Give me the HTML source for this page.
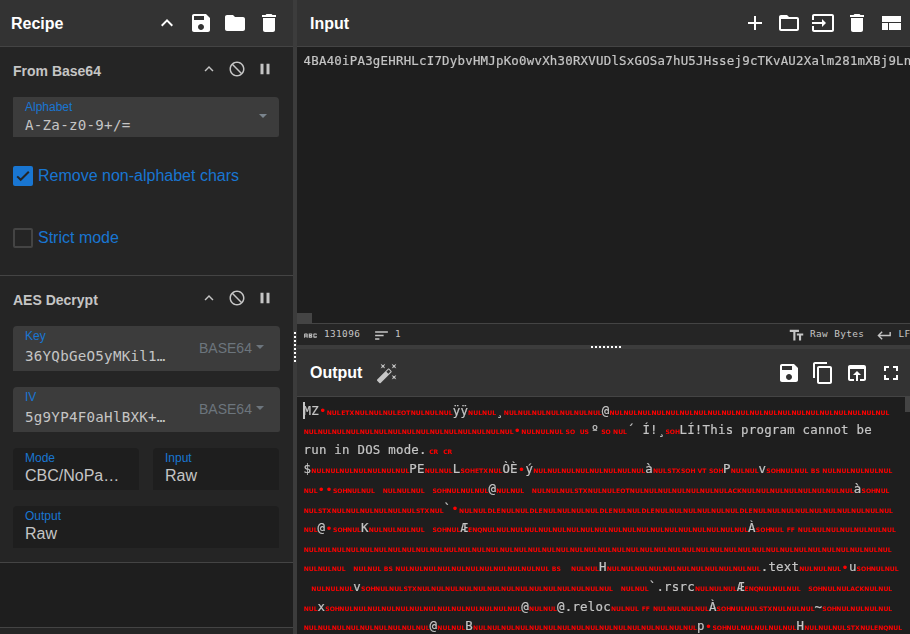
<!DOCTYPE html>
<html lang="en">
<head>
<meta charset="utf-8">
<title>CyberChef</title>
<style>
*{box-sizing:border-box}
html,body{margin:0;padding:0}
body{width:910px;height:634px;overflow:hidden;background:#1e1e1e;color:#c5c5c5;font-family:"Liberation Sans",sans-serif;font-size:14px;position:relative}
.abs{position:absolute}
svg{display:block;position:absolute}
/* panels */
#recipe{position:absolute;left:0;top:0;width:293px;height:634px;background:#1e1e1e}
#vgut{position:absolute;left:293px;top:0;width:4px;height:634px;background:#3c3c3c}
#io{position:absolute;left:297px;top:0;width:613px;height:634px;overflow:hidden}
.title{position:absolute;left:0;width:100%;height:47px;background:#333;border-bottom:1px solid #444;color:#fff;font-weight:bold;font-size:16px;line-height:18px}
.title span{position:absolute;top:15px;white-space:nowrap}
.op{position:absolute;left:0;width:293px;background:#252525;border-bottom:1px solid #444}
.opname{position:absolute;left:13px;top:16px;font-weight:bold;font-size:14px;line-height:16px;color:#c5c5c5;white-space:nowrap}
.arg{position:absolute;background:#3c3c3c;border-radius:4px 4px 2px 0}
.arg.dk{background:#1e1e1e;border-radius:4px 4px 0 0}
.lbl{position:absolute;left:12px;font-size:12px;line-height:14px;color:#1976d2;white-space:nowrap}
.val{position:absolute;left:12px;white-space:nowrap;color:#c5c5c5}
.mono{font-family:"DejaVu Sans Mono","Liberation Mono",monospace}
.m16{font-size:14.2px;letter-spacing:.25px;line-height:18px}
.s16{font-size:16px;line-height:18px}
.b64{position:absolute;font-size:14px;line-height:16px;color:#6c757d;white-space:nowrap}
.b64:after{content:"";position:absolute;left:57px;top:5px;border-top:4.2px solid #6c757d;border-left:4.2px solid transparent;border-right:4.2px solid transparent}
.cb{position:absolute;left:13px;width:20px;height:20px;border-radius:2px}
.cbl{position:absolute;left:38px;font-size:16px;line-height:18px;color:#1976d2;white-space:nowrap}
/* editors */
.ed{position:absolute;left:0;width:613px;overflow:hidden;will-change:transform}
.ln{position:absolute;left:6.6px;height:19.6px;line-height:19.6px;white-space:pre;font-family:"DejaVu Sans Mono","Liberation Mono",monospace;font-size:12.4px;letter-spacing:.235px;color:#c5c5c5;-webkit-text-stroke:.2px #c5c5c5}
.ln i{display:inline-block;width:14px;text-align:center;font:bold 6.1px/6px "DejaVu Sans","Liberation Sans",sans-serif;letter-spacing:0;color:#f00;-webkit-text-stroke:0;position:relative;top:0}
.ln b{font-weight:normal;color:#f00;-webkit-text-stroke:0;position:relative;top:.5px}
.ln u{display:inline-block;width:7.7px;text-decoration:none}
#status{position:absolute;left:0;top:323px;width:613px;height:22px;background:#252525;border-top:1px solid #444;font-family:"DejaVu Sans Mono","Liberation Mono",monospace;font-size:9.4px;letter-spacing:.39px;line-height:12px;color:#c5c5c5}
#status span{position:absolute;top:4px;white-space:pre}
#hgut{position:absolute;left:0;top:345px;width:613px;height:4px;background:#3c3c3c}
.dot{position:absolute;width:2px;height:2px;background:#fff}
</style>
</head>
<body>

<!-- ================= RECIPE ================= -->
<div id="recipe">
  <div class="title" style="top:0"><span style="left:11px">Recipe</span>
    <svg style="left:155px;top:11px" width="24" height="24" viewBox="0 0 24 24"><path fill="#fff" d="M12 8l-6 6 1.41 1.41L12 10.83l4.59 4.58L18 14z"/></svg><svg style="left:189px;top:11px" width="24" height="24" viewBox="0 0 24 24"><path fill="#fff" d="M17 3H5c-1.11 0-2 .9-2 2v14c0 1.1.89 2 2 2h14c1.1 0 2-.9 2-2V7l-4-4zm-5 16c-1.66 0-3-1.34-3-3s1.34-3 3-3 3 1.34 3 3-1.34 3-3 3zm3-10H5V5h10v4z"/></svg><svg style="left:223px;top:11px" width="24" height="24" viewBox="0 0 24 24"><path fill="#fff" d="M10 4H4c-1.1 0-1.99.9-1.99 2L2 18c0 1.1.9 2 2 2h16c1.1 0 2-.9 2-2V8c0-1.1-.9-2-2-2h-8l-2-2z"/></svg><svg style="left:257px;top:11px" width="24" height="24" viewBox="0 0 24 24"><path fill="#fff" d="M6 19c0 1.1.9 2 2 2h8c1.1 0 2-.9 2-2V7H6v12zM19 4h-3.5l-1-1h-5l-1 1H5v2h14V4z"/></svg>
  </div>

  <div class="op" style="top:47px;height:229px">
    <div class="opname">From Base64</div>
    <svg style="left:199.5px;top:13px" width="18" height="18" viewBox="0 0 24 24"><path fill="#c5c5c5" d="M12 8l-6 6 1.41 1.41L12 10.83l4.59 4.58L18 14z"/></svg><svg style="left:227.7px;top:13px" width="18" height="18" viewBox="0 0 24 24"><path fill="#c5c5c5" d="M12 2C6.48 2 2 6.48 2 12s4.48 10 10 10 10-4.48 10-10S17.52 2 12 2zm0 18c-4.42 0-8-3.58-8-8 0-1.85.63-3.55 1.69-4.9L16.9 18.31C15.55 19.37 13.85 20 12 20zm6.31-3.1L7.1 5.69C8.45 4.63 10.15 4 12 4c4.42 0 8 3.58 8 8 0 1.85-.63 3.55-1.69 4.9z"/></svg><svg style="left:255.5px;top:13px" width="18" height="18" viewBox="0 0 24 24"><path fill="#c5c5c5" d="M6 19h4V5H6v14zm8-14v14h4V5h-4z"/></svg>
    <div class="arg" style="left:13px;top:50px;width:266px;height:40px;border-radius:1px 4px 2px 0">
      <div class="lbl" style="top:2.5px">Alphabet</div>
      <div class="val mono m16" style="top:19px">A-Za-z0-9+/=</div>
      <div class="abs" style="left:246px;top:17px;border-top:4.2px solid #7b858e;border-left:4.2px solid transparent;border-right:4.2px solid transparent"></div>
    </div>
    <div class="cb" style="top:119px;background:#1976d2"><svg width="20" height="20" viewBox="0 0 20 20"><path d="M4.2 10.4 7.7 13.8 15.8 5.7" fill="none" stroke="#252525" stroke-width="2"/></svg></div>
    <div class="cbl" style="top:120px">Remove non-alphabet chars</div>
    <div class="cb" style="top:181px;border:2px solid #444"></div>
    <div class="cbl" style="top:182px">Strict mode</div>
  </div>

  <div class="op" style="top:276px;height:287px">
    <div class="opname">AES Decrypt</div>
    <svg style="left:199.5px;top:13px" width="18" height="18" viewBox="0 0 24 24"><path fill="#c5c5c5" d="M12 8l-6 6 1.41 1.41L12 10.83l4.59 4.58L18 14z"/></svg><svg style="left:227.7px;top:13px" width="18" height="18" viewBox="0 0 24 24"><path fill="#c5c5c5" d="M12 2C6.48 2 2 6.48 2 12s4.48 10 10 10 10-4.48 10-10S17.52 2 12 2zm0 18c-4.42 0-8-3.58-8-8 0-1.85.63-3.55 1.69-4.9L16.9 18.31C15.55 19.37 13.85 20 12 20zm6.31-3.1L7.1 5.69C8.45 4.63 10.15 4 12 4c4.42 0 8 3.58 8 8 0 1.85-.63 3.55-1.69 4.9z"/></svg><svg style="left:255.5px;top:13px" width="18" height="18" viewBox="0 0 24 24"><path fill="#c5c5c5" d="M6 19h4V5H6v14zm8-14v14h4V5h-4z"/></svg>
    <div class="arg" style="left:13px;top:50px;width:267px;height:45px">
      <div class="lbl" style="top:2.5px">Key</div>
      <div class="val mono m16" style="top:21px">36YQbGeO5yMKil1…</div>
      <div class="b64" style="left:186px;top:14px">BASE64</div>
    </div>
    <div class="arg" style="left:13px;top:111px;width:267px;height:45px">
      <div class="lbl" style="top:2.5px">IV</div>
      <div class="val mono m16" style="top:21px">5g9YP4F0aHlBXK+…</div>
      <div class="b64" style="left:186px;top:14px">BASE64</div>
    </div>
    <div class="arg dk" style="left:13px;top:172px;width:126px;height:42px">
      <div class="lbl" style="top:2.5px">Mode</div>
      <div class="val s16" style="top:19px">CBC/NoPa…</div>
    </div>
    <div class="arg dk" style="left:153px;top:172px;width:126px;height:42px">
      <div class="lbl" style="top:2.5px">Input</div>
      <div class="val s16" style="top:19px">Raw</div>
    </div>
    <div class="arg dk" style="left:13px;top:230px;width:266px;height:42px">
      <div class="lbl" style="top:2.5px">Output</div>
      <div class="val s16" style="top:19px">Raw</div>
    </div>
  </div>

  <div class="abs" style="left:0;top:627px;width:293px;height:7px;background:#252525;border-top:1px solid #444"></div>
</div>

<!-- ================= GUTTER ================= -->
<div id="vgut">
<div class="dot" style="left:1px;top:332px"></div><div class="dot" style="left:1px;top:336px"></div><div class="dot" style="left:1px;top:340px"></div><div class="dot" style="left:1px;top:344px"></div><div class="dot" style="left:1px;top:348px"></div><div class="dot" style="left:1px;top:352px"></div><div class="dot" style="left:1px;top:356px"></div><div class="dot" style="left:1px;top:360px"></div>
</div>

<!-- ================= INPUT / OUTPUT ================= -->
<div id="io">
  <div class="title" style="top:0"><span style="left:13px">Input</span>
    <svg style="left:446px;top:11px" width="24" height="24" viewBox="0 0 24 24"><path fill="#fff" d="M19 13h-6v6h-2v-6H5v-2h6V5h2v6h6v2z"/></svg><svg style="left:480px;top:11px" width="24" height="24" viewBox="0 0 24 24"><path fill="#fff" d="M20 6h-8l-2-2H4c-1.1 0-1.99.9-1.99 2L2 18c0 1.1.9 2 2 2h16c1.1 0 2-.9 2-2V8c0-1.1-.9-2-2-2zm0 12H4V8h16v10z"/></svg><svg style="left:514px;top:11px" width="24" height="24" viewBox="0 0 24 24"><path fill="#fff" d="M21 3.01H3c-1.1 0-2 .9-2 2V9h2V4.99h18v14.03H3V15H1v4.01c0 1.1.9 1.98 2 1.98h18c1.1 0 2-.88 2-1.98v-14c0-1.11-.9-2-2-2zM11 16l4-4-4-4v3H1v2h10v3z"/></svg><svg style="left:548px;top:11px" width="24" height="24" viewBox="0 0 24 24"><path fill="#fff" d="M6 19c0 1.1.9 2 2 2h8c1.1 0 2-.9 2-2V7H6v12zM19 4h-3.5l-1-1h-5l-1 1H5v2h14V4z"/></svg><svg style="left:582px;top:11px" width="24" height="24" viewBox="0 0 24 24"><path fill="#fff" d="M3 19h6v-7H3v7zm7 0h12v-7H10v7zM3 5v6h19V5H3z"/></svg>
  </div>

  <div class="ed" style="top:47px;height:276px;background:#1e1e1e">
    <div class="ln" style="top:4px">4BA40iPA3gEHRHLcI7DybvHMJpKo0wvXh30RXVUDlSxGOSa7hU5JHssej9cTKvAU2Xalm281mXBj9Ln</div>
    <div class="abs" style="left:0;top:266px;width:15px;height:10px;background:#444"></div>
  </div>

  <div id="status">
    <svg style="left:5.1px;top:2.5px" width="17" height="17" viewBox="0 0 24 24"><path fill="#c5c5c5" d="M21 11h-1.5v-.5h-2v3h2V13H21v1c0 .55-.45 1-1 1h-3c-.55 0-1-.45-1-1v-4c0-.55.45-1 1-1h3c.55 0 1 .45 1 1v1zM8 10v5H6.5v-1.5h-2V15H3v-5c0-.55.45-1 1-1h3c.55 0 1 .45 1 1zm-1.5.5h-2V12h2v-1.5zm7 1.5c.55 0 1 .45 1 1v1c0 .55-.45 1-1 1h-4V9h4c.55 0 1 .45 1 1v1c0 .55-.45 1-1 1zM11 10.5v.75h2v-.75h-2zm2 2.250h-2v.75h2v-.75z"/></svg><svg style="left:76px;top:2.5px" width="17" height="17" viewBox="0 0 24 24"><path fill="#c5c5c5" d="M3 18h6v-2H3v2zM3 6v2h18V6H3zm0 7h12v-2H3v2z"/></svg><svg style="left:490.6px;top:2.95px" width="17" height="17" viewBox="0 0 24 24"><path fill="#c5c5c5" d="M2.5 4v3h5v12h3V7h5V4h-13zm19 5h-9v3h3v7h3v-7h3V9z"/></svg><svg style="left:578.75px;top:2.5px" width="17" height="17" viewBox="0 0 24 24"><path fill="#c5c5c5" d="M19 7v4H5.83l3.58-3.59L8 6l-6 6 6 6 1.41-1.41L5.83 13H21V7z"/></svg>
    <span style="left:27px">131096</span>
    <span style="left:98px">1</span>
    <span style="left:513px">Raw Bytes</span>
    <span style="left:601.5px">LF</span>
  </div>

  <div id="hgut">
<div class="dot" style="left:294px;top:1px"></div><div class="dot" style="left:298px;top:1px"></div><div class="dot" style="left:302px;top:1px"></div><div class="dot" style="left:306px;top:1px"></div><div class="dot" style="left:310px;top:1px"></div><div class="dot" style="left:314px;top:1px"></div><div class="dot" style="left:318px;top:1px"></div><div class="dot" style="left:322px;top:1px"></div>
  </div>

  <div class="title" style="top:349px;height:48px"><div class="abs" style="left:0;top:1px;width:613px;height:46px"><span style="left:13px;top:13.6px">Output</span>
    <svg style="left:78.9px;top:11.9px" width="22.2" height="22.2" viewBox="0 0 24 24"><path fill="#c5c5c5" d="M7.5 5.6L10 7 8.6 4.5 10 2 7.5 3.4 5 2l1.4 2.5L5 7zm12 9.800L17 14l1.4 2.5L17 19l2.5-1.4L22 19l-1.4-2.5L22 14zM22 2l-2.500 1.4L17 2l1.4 2.5L17 7l2.5-1.4L22 7l-1.4-2.5zm-7.630 5.290c-.39-.39-1.020-.39-1.410 0L1.290 18.960c-.39.39-.39 1.020 0 1.410l2.340 2.340c.39.39 1.020.39 1.410 0L16.700 11.050c.39-.39.39-1.020 0-1.410l-2.330-2.350zm-1.030 5.490l-2.120-2.120 2.440-2.440 2.120 2.120-2.440 2.440z"/></svg><svg style="left:480px;top:11px" width="24" height="24" viewBox="0 0 24 24"><path fill="#fff" d="M17 3H5c-1.11 0-2 .9-2 2v14c0 1.1.89 2 2 2h14c1.1 0 2-.9 2-2V7l-4-4zm-5 16c-1.66 0-3-1.34-3-3s1.34-3 3-3 3 1.34 3 3-1.34 3-3 3zm3-10H5V5h10v4z"/></svg><svg style="left:514px;top:11px" width="24" height="24" viewBox="0 0 24 24"><path fill="#fff" d="M16 1H4c-1.1 0-2 .9-2 2v14h2V3h12V1zm3 4H8c-1.1 0-2 .9-2 2v14c0 1.1.9 2 2 2h11c1.1 0 2-.9 2-2V7c0-1.1-.9-2-2-2zm0 16H8V7h11v14z"/></svg><svg style="left:548px;top:11px" width="24" height="24" viewBox="0 0 24 24"><path fill="#fff" d="M19 4H5c-1.11 0-2 .9-2 2v12c0 1.1.89 2 2 2h4v-2H5V8h14v10h-4v2h4c1.1 0 2-.9 2-2V6c0-1.1-.89-2-2-2zm-7 6l-4 4h3v6h2v-6h3l-4-4z"/></svg><svg style="left:582px;top:11px" width="24" height="24" viewBox="0 0 24 24"><path fill="#fff" d="M7 14H5v5h5v-2H7v-3zm-2-4h2V7h3V5H5v5zm12 7h-3v2h5v-5h-2v3zM14 5v2h3v3h2V5h-5z"/></svg>
  </div></div>

  <div class="ed" style="top:397px;height:237px;background:#1e1e1e">
    <div class="abs" style="left:6.4px;top:5.2px;width:1.2px;height:16.5px;background:#c5c5c5"></div>
    <div class="abs" style="left:0;top:3.7px;width:613px;height:240px">
<div class="ln" style="top:0.0px">MZ<b>•</b><i>NUL</i><i>ETX</i><i>NUL</i><i>NUL</i><i>NUL</i><i>EOT</i><i>NUL</i><i>NUL</i><i>NUL</i>ÿÿ<i>NUL</i><i>NUL</i>¸<i>NUL</i><i>NUL</i><i>NUL</i><i>NUL</i><i>NUL</i><i>NUL</i><i>NUL</i>@<i>NUL</i><i>NUL</i><i>NUL</i><i>NUL</i><i>NUL</i><i>NUL</i><i>NUL</i><i>NUL</i><i>NUL</i><i>NUL</i><i>NUL</i><i>NUL</i><i>NUL</i><i>NUL</i><i>NUL</i><i>NUL</i><i>NUL</i><i>NUL</i><i>NUL</i><i>NUL</i></div>
<div class="ln" style="top:19.6px"><i>NUL</i><i>NUL</i><i>NUL</i><i>NUL</i><i>NUL</i><i>NUL</i><i>NUL</i><i>NUL</i><i>NUL</i><i>NUL</i><i>NUL</i><i>NUL</i><i>NUL</i><i>NUL</i><i>NUL</i><b>•</b><i>NUL</i><i>NUL</i><i>NUL</i><i>SO</i><i>US</i>º<i>SO</i><i>NUL</i>´<u></u>Í!¸<i>SOH</i>LÍ!This program cannot be</div>
<div class="ln" style="top:39.2px">run in DOS mode.<i>CR</i><i>CR</i></div>
<div class="ln" style="top:58.8px">$<i>NUL</i><i>NUL</i><i>NUL</i><i>NUL</i><i>NUL</i><i>NUL</i><i>NUL</i>PE<i>NUL</i><i>NUL</i>L<i>SOH</i><i>ETX</i><i>NUL</i>ÒÈ<b>•</b>ý<i>NUL</i><i>NUL</i><i>NUL</i><i>NUL</i><i>NUL</i><i>NUL</i><i>NUL</i><i>NUL</i>à<i>NUL</i><i>STX</i><i>SOH</i><i>VT</i><i>SOH</i>P<i>NUL</i><i>NUL</i>v<i>SOH</i><i>NUL</i><i>NUL</i><i>BS</i><i>NUL</i><i>NUL</i><i>NUL</i><i>NUL</i><i>NUL</i></div>
<div class="ln" style="top:78.4px"><i>NUL</i><b>••</b><i>SOH</i><i>NUL</i><i>NUL</i> <i>NUL</i><i>NUL</i><i>NUL</i>&nbsp;<i>SOH</i><i>NUL</i><i>NUL</i><i>NUL</i>@<i>NUL</i><i>NUL</i> <i>NUL</i><i>NUL</i><i>NUL</i><i>STX</i><i>NUL</i><i>NUL</i><i>EOT</i><i>NUL</i><i>NUL</i><i>NUL</i><i>NUL</i><i>NUL</i><i>NUL</i><i>NUL</i><i>ACK</i><i>NUL</i><i>NUL</i><i>NUL</i><i>NUL</i><i>NUL</i><i>NUL</i><i>NUL</i><i>NUL</i>à<i>SOH</i><i>NUL</i></div>
<div class="ln" style="top:98.0px"><i>NUL</i><i>STX</i><i>NUL</i><i>NUL</i><i>NUL</i><i>NUL</i><i>NUL</i><i>NUL</i><i>STX</i><i>NUL</i>`<b>•</b><i>NUL</i><i>NUL</i><i>DLE</i><i>NUL</i><i>NUL</i><i>DLE</i><i>NUL</i><i>NUL</i><i>NUL</i><i>NUL</i><i>DLE</i><i>NUL</i><i>NUL</i><i>DLE</i><i>NUL</i><i>NUL</i><i>NUL</i><i>NUL</i><i>NUL</i><i>NUL</i><i>DLE</i><i>NUL</i><i>NUL</i><i>NUL</i><i>NUL</i><i>NUL</i><i>NUL</i><i>NUL</i><i>NUL</i><i>NUL</i><i>NUL</i></div>
<div class="ln" style="top:117.6px"><i>NUL</i>@<b>•</b><i>SOH</i><i>NUL</i>K<i>NUL</i><i>NUL</i><i>NUL</i><i>NUL</i>&nbsp;<i>SOH</i><i>NUL</i>Æ<i>ENQ</i><i>NUL</i><i>NUL</i><i>NUL</i><i>NUL</i><i>NUL</i><i>NUL</i><i>NUL</i><i>NUL</i><i>NUL</i><i>NUL</i><i>NUL</i><i>NUL</i><i>NUL</i><i>NUL</i><i>NUL</i><i>NUL</i><i>NUL</i><i>NUL</i><i>NUL</i>À<i>SOH</i><i>NUL</i><i>FF</i><i>NUL</i><i>NUL</i><i>NUL</i><i>NUL</i><i>NUL</i><i>NUL</i><i>NUL</i></div>
<div class="ln" style="top:137.2px"><i>NUL</i><i>NUL</i><i>NUL</i><i>NUL</i><i>NUL</i><i>NUL</i><i>NUL</i><i>NUL</i><i>NUL</i><i>NUL</i><i>NUL</i><i>NUL</i><i>NUL</i><i>NUL</i><i>NUL</i><i>NUL</i><i>NUL</i><i>NUL</i><i>NUL</i><i>NUL</i><i>NUL</i><i>NUL</i><i>NUL</i><i>NUL</i><i>NUL</i><i>NUL</i><i>NUL</i><i>NUL</i><i>NUL</i><i>NUL</i><i>NUL</i><i>NUL</i><i>NUL</i><i>NUL</i><i>NUL</i><i>NUL</i><i>NUL</i><i>NUL</i><i>NUL</i><i>NUL</i><i>NUL</i><i>NUL</i></div>
<div class="ln" style="top:156.8px"><i>NUL</i><i>NUL</i><i>NUL</i> <i>NUL</i><i>NUL</i><i>BS</i><i>NUL</i><i>NUL</i><i>NUL</i><i>NUL</i><i>NUL</i><i>NUL</i><i>NUL</i><i>NUL</i><i>NUL</i><i>NUL</i><i>NUL</i><i>BS</i> <i>NUL</i><i>NUL</i>H<i>NUL</i><i>NUL</i><i>NUL</i><i>NUL</i><i>NUL</i><i>NUL</i><i>NUL</i><i>NUL</i><i>NUL</i><i>NUL</i><i>NUL</i>.text<i>NUL</i><i>NUL</i><i>NUL</i><b>•</b>u<i>SOH</i><i>NUL</i><i>NUL</i></div>
<div class="ln" style="top:176.4px"> <i>NUL</i><i>NUL</i><i>NUL</i>v<i>SOH</i><i>NUL</i><i>NUL</i><i>STX</i><i>NUL</i><i>NUL</i><i>NUL</i><i>NUL</i><i>NUL</i><i>NUL</i><i>NUL</i><i>NUL</i><i>NUL</i><i>NUL</i><i>NUL</i><i>NUL</i><i>NUL</i><i>NUL</i> <i>NUL</i><i>NUL</i>`.rsrc<i>NUL</i><i>NUL</i><i>NUL</i>Æ<i>ENQ</i><i>NUL</i><i>NUL</i><i>NUL</i>&nbsp;<i>SOH</i><i>NUL</i><i>NUL</i><i>ACK</i><i>NUL</i><i>NUL</i></div>
<div class="ln" style="top:196.0px"><i>NUL</i>x<i>SOH</i><i>NUL</i><i>NUL</i><i>NUL</i><i>NUL</i><i>NUL</i><i>NUL</i><i>NUL</i><i>NUL</i><i>NUL</i><i>NUL</i><i>NUL</i><i>NUL</i><i>NUL</i>@<i>NUL</i><i>NUL</i>@.reloc<i>NUL</i><i>NUL</i><i>FF</i><i>NUL</i><i>NUL</i><i>NUL</i><i>NUL</i>À<i>SOH</i><i>NUL</i><i>NUL</i><i>STX</i><i>NUL</i><i>NUL</i><i>NUL</i>~<i>SOH</i><i>NUL</i><i>NUL</i><i>NUL</i><i>NUL</i></div>
<div class="ln" style="top:215.6px"><i>NUL</i><i>NUL</i><i>NUL</i><i>NUL</i><i>NUL</i><i>NUL</i><i>NUL</i><i>NUL</i><i>NUL</i>@<i>NUL</i><i>NUL</i>B<i>NUL</i><i>NUL</i><i>NUL</i><i>NUL</i><i>NUL</i><i>NUL</i><i>NUL</i><i>NUL</i><i>NUL</i><i>NUL</i><i>NUL</i><i>NUL</i><i>NUL</i><i>NUL</i><i>NUL</i><i>NUL</i>p<b>•</b><i>SOH</i><i>NUL</i><i>NUL</i><i>NUL</i><i>NUL</i><i>NUL</i>H<i>NUL</i><i>NUL</i><i>NUL</i><i>STX</i><i>NUL</i><i>ENQ</i><i>NUL</i></div>
    </div>
    <div class="abs" style="left:608px;top:0;width:5px;height:15px;background:#444"></div>
  </div>
</div>

</body>
</html>
